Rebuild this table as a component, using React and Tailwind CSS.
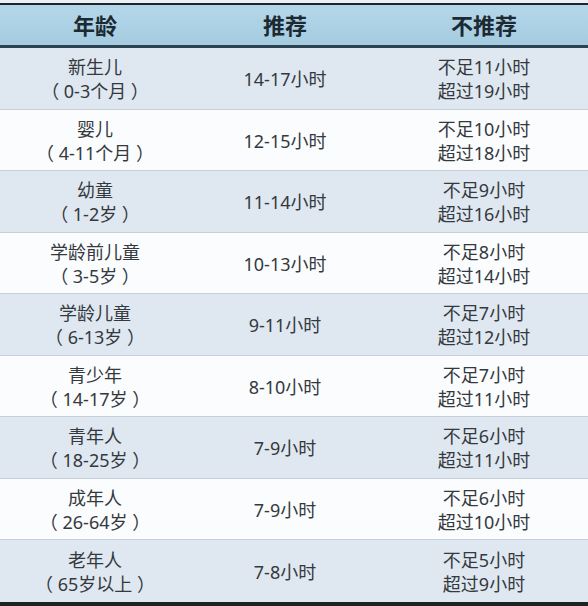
import React from 'react';

const rows = [
    { age: '新生儿', range: '（ 0-3个月 ）', ok: '14-17小时', bad: ['不足11小时', '超过19小时'] },
    { age: '婴儿', range: '（ 4-11个月 ）', ok: '12-15小时', bad: ['不足10小时', '超过18小时'] },
    { age: '幼童', range: '（ 1-2岁 ）', ok: '11-14小时', bad: ['不足9小时', '超过16小时'] },
    { age: '学龄前儿童', range: '（ 3-5岁 ）', ok: '10-13小时', bad: ['不足8小时', '超过14小时'] },
    { age: '学龄儿童', range: '（ 6-13岁 ）', ok: '9-11小时', bad: ['不足7小时', '超过12小时'] },
    { age: '青少年', range: '（ 14-17岁 ）', ok: '8-10小时', bad: ['不足7小时', '超过11小时'] },
    { age: '青年人', range: '（ 18-25岁 ）', ok: '7-9小时', bad: ['不足6小时', '超过11小时'] },
    { age: '成年人', range: '（ 26-64岁 ）', ok: '7-9小时', bad: ['不足6小时', '超过10小时'] },
    { age: '老年人', range: '（ 65岁以上 ）', ok: '7-8小时', bad: ['不足5小时', '超过9小时'] },
];

export default function App() {
    return (
        <div
            className="w-[588px] h-[606px] overflow-hidden bg-[#eef1f3] pt-[3px]"
            style={{ fontFamily: '"Noto Sans", "Noto Sans CJK SC", sans-serif' }}
        >
            {/* Header */}
            <div className="grid grid-cols-[190px_190px_1fr] h-[45px] border-t-2 border-b-[3px] border-t-[#1c262c] border-b-[#2c4452] bg-gradient-to-b from-[#b5d7e9] to-[#a5cbe0] text-[22px] font-bold text-[#1b2a33]">
                <div className="flex items-center justify-center">年龄</div>
                <div className="flex items-center justify-center">推荐</div>
                <div className="flex items-center justify-center">不推荐</div>
            </div>

            {/* Body */}
            {rows.map((r, i) => (
                <div
                    key={r.age}
                    className={`grid grid-cols-[190px_190px_1fr] h-[61.5px] pt-[2px] text-[18px] leading-[24px] text-[#34393d] ${
                        i % 2 === 0 ? 'bg-[#dfe7f1]' : 'bg-[#fbfcfd]'
                    } ${i < rows.length - 1 ? 'border-b border-[#c7d0d8]' : ''}`}
                >
                    <div className="flex flex-col items-center justify-center">
                        <span>{r.age}</span>
                        <span>{r.range}</span>
                    </div>
                    <div className="flex items-center justify-center">{r.ok}</div>
                    <div className="flex flex-col items-center justify-center">
                        <span>{r.bad[0]}</span>
                        <span>{r.bad[1]}</span>
                    </div>
                </div>
            ))}
            <div className="h-[5px] bg-[#1c2226]" />
        </div>
    );
}
